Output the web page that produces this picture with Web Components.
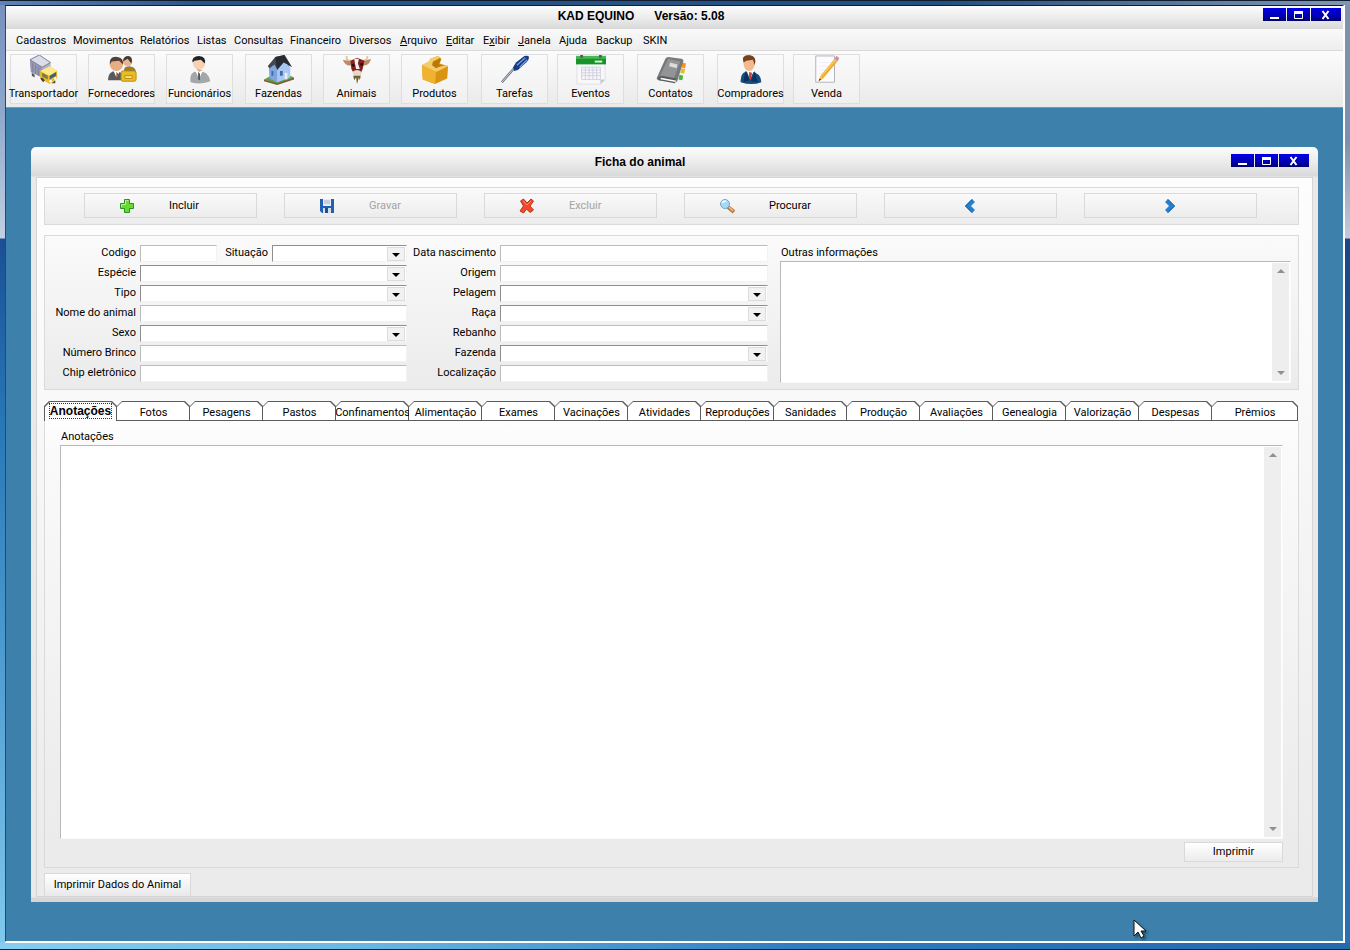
<!DOCTYPE html>
<html lang="pt-BR">
<head>
<meta charset="utf-8">
<title>KAD EQUINO</title>
<style>
  html, body { margin: 0; }
  body { font: 11px/16px Roboto, "Liberation Sans", sans-serif; color: #000; min-height: 100vh; display: flex; }
</style>
</head>
<body>
<kad-app></kad-app>
<script>
const ICONS = {
  truck: `<svg viewBox="0 0 32 32"><path d="M1 5 11 0l12 8v11l-9 5L2 18z" fill="#aeb0cb"/><path d="M1 5 11 0l12 8-9 5z" fill="#dcdde9"/><path d="m1 5 13 8v11L2 18z" fill="#9698b2"/><path d="M1 5 11 0l12 8-9 5z" fill="none" stroke="#7c7e94"/><path d="M4 9v9M7 11v9M10 13v9" stroke="#7f819b"/><path d="m12 17 10-5 8 5v8l-8 6-10-6z" fill="#eebc20"/><path d="m12 17 10-5 8 5-8 5z" fill="#ffe98a"/><path d="m22 22 7-4v4l-7 4z" fill="#40637c"/><path d="m14 19 6 3v4l-6-3z" fill="#7d7a45"/><path d="m12 25 2-1 3 3-2 2zM24 30l4-3v3z" fill="#4c4434"/><path d="m3 19 3 2v3l-3-2z" fill="#555566"/><circle cx="28" cy="25" r="1.300" fill="#fff"/><circle cx="23" cy="28" r="1.300" fill="#fff"/></svg>`,
  people: `<svg viewBox="0 0 32 32"><path d="M18 17q0-5 6-5 7 1 7 7v4H18z" fill="#777d7d"/><circle cx="22" cy="7" r="5" fill="#e9b68f"/><path d="M17 7q0-6 6-6 5 1 3 8l-4-5z" fill="#443a34"/><path d="M1 27q0-10 9-10 8 1 9 10z" fill="#555a5e"/><path d="m7 17 3 7 4-7z" fill="#fff"/><path d="m10 18 2 2-2 6z" fill="#9f4535"/><circle cx="10" cy="10" r="7" fill="#e7ad83"/><path d="M3 10Q2 1 11 2q7 1 6 8l-4-4-8 1z" fill="#554038"/><rect x="15" y="17" width="16" height="11" rx="2" fill="#e9bd1e" stroke="#b98c12"/><path d="M20 17v-3h7v3" stroke="#ac7e0e" fill="none" stroke-width="2"/><path d="M19 22h8v3h-8z" fill="#fbe17a" stroke="#b98c12"/></svg>`,
  person: `<svg viewBox="0 0 32 32"><path d="M6 29q-2-11 8-12 11 0 13 11-9 4-21 1z" fill="#a2a8aa"/><path d="m11 17 4 8 4-8z" fill="#fff"/><path d="m14 18 2 2v7l-2-1z" fill="#555"/><circle cx="15" cy="9" r="6.500" fill="#f8d2b0"/><path d="M8 8Q7 1 15 1q8 1 6 8l-4-4-7 1z" fill="#202325"/><path d="m12 15 3 3 4-2" fill="#dca77d"/></svg>`,
  house: `<svg viewBox="0 0 32 32"><path d="m0 26 17-9 15 7-18 7z" fill="#58a541"/><path d="m0 26 14 4 18-6v2l-18 6L0 28z" fill="#85573a"/><path d="m5 11 8-7 8 7 6-1v14l-13 5-8-4z" fill="#80a5dd"/><path d="m14 16 7-9 7 7v10l-14 5z" fill="#a8c8f3"/><path d="m4 12 8-10 10-2-8 15-3-5-5 4z" fill="#45464e"/><path d="m12 2 10-2 8 13-9-5-7 8z" fill="#292b32"/><path d="M17 17h3v5h-3zM8 17h2v5H8z" fill="#3e6cae"/><path d="M22 19h3v7h-3z" fill="#e7ecf4"/></svg>`,
  cow: `<svg viewBox="0 0 32 32"><path d="M10 6Q4 7 5 1M22 6q6 0 5-5" fill="none" stroke="#dcc7a4" stroke-width="2"/><path d="m10 7-9-2q2 7 9 6zM22 7l9-3q-2 8-9 7z" fill="#c08a68"/><path d="m9 6 7-3 8 3-2 9-3 7h-5l-4-7z" fill="#84201f"/><path d="m13 4 5 0-1 5 2 6h-4l-1-5z" fill="#f5efed"/><circle cx="12" cy="11" r="1.500" fill="#210f0e"/><circle cx="21" cy="10" r="1.500" fill="#210f0e"/><path d="M11 18q5-4 10 0l-2 5h-6z" fill="#ecd5c7"/><path d="m12 22 1 5 2-3 1 7 2-7 1 3 1-5z" fill="#6c6334"/></svg>`,
  box: `<svg viewBox="0 0 32 32"><path d="m2 11 8-4 1-3 8-3 4 3-2 5 9 3-1 13-13 6-13-5z" fill="#d99512"/><path d="m2 11 7-4 2-3 8-3 2 2-7 4-1 3 5 3 11-2 1 1-13 6z" fill="#f6cb68"/><path d="m2 11 15 7-1 13-13-5z" fill="#efb331"/><path d="m13 11 1-4 7-3 1 1-2 5 4 1-7 3z" fill="#b97a0c"/></svg>`,
  driver: `<svg viewBox="0 0 32 32"><path d="M2 29 16 13" stroke="#66717c" stroke-width="2.500"/><path d="M2 29 16 13" stroke="#d3dae1"/><path d="m14 13 3-5 9-7q4-1 5 1 0 3-3 6l-9 8-4 1z" fill="#183b85"/><path d="m18 11 9-8M21 13l8-8" stroke="#739ee0" stroke-width="1.500"/></svg>`,
  calendar: `<svg viewBox="0 0 32 32"><path d="M1 7h30v20l-5 4H1z" fill="#f8f8fb" stroke="#dedee6"/><path d="M0 1h32v9H0z" fill="#16942a"/><path d="M0 1h32v3H0z" fill="#48b955"/><path d="M6 0v3M26 0v3" stroke="#67516b" stroke-width="3"/><path d="M20 7h8" stroke="#d9ffe0" stroke-width="2"/><path d="M6 13h20v13H6zM6 16h20M6 19h20M6 22h20M10 13v13M14 13v13M18 13v13M22 13v13" stroke="#cfcfde" fill="none"/><path d="m26 31 0-5h5z" fill="#c7c7d0"/></svg>`,
  book: `<svg viewBox="0 0 32 32"><path d="m27 5 3 1-4 22-4 1z" fill="#eee"/><path d="m28 8 4 1-1 5-4-1z" fill="#ff8e1a"/><path d="m27 14 4 1-1 5-4-1z" fill="#e9bd1e"/><path d="m25 21 4 1-1 5-4-1z" fill="#45b735"/><path d="m1 24 9-20q1-2 3-2l14 2q3 1 2 3l-6 20q-1 3-4 2L3 27q-3-1-2-3z" fill="#77797b"/><path d="m4 23 9-19 13 3-7 18z" fill="#929496"/><path d="m15 8 8 2-1 4-8-2z" fill="#dadcdd"/><path d="m2 24 4-2 16 3-2 5-17-3z" fill="#5c5d5f"/><path d="m5 25 16 3" stroke="#fff" stroke-width="1.500"/></svg>`,
  buyer: `<svg viewBox="0 0 32 32"><path d="M5 29q-1-12 10-12 12 2 12 12-10 4-22 0z" fill="#174c80"/><path d="m11 16 4 10 4-9z" fill="#fff"/><path d="m14 18 3 1-1 8-2-3z" fill="#c43d32"/><path d="m10 17 5 10-7 2zM20 17l-4 11 7 1z" fill="#0e315f"/><ellipse cx="14" cy="9" rx="6" ry="8" fill="#f1b98d"/><path d="M8 8Q5 0 14 0q9 1 6 11l-2-6-7 1z" fill="#75421f"/></svg>`,
  note: `<svg viewBox="0 0 32 32"><path d="M4 1h20v28H4z" fill="#fcfcff" stroke="#adb0b5"/><path d="M8 8h12M8 12h12M8 16h12M8 20h12" stroke="#ededf4"/><path d="m7 28 2-6L24 4l3 3-15 18z" fill="#f7c04c"/><path d="m11 24 15-17" fill="none" stroke="#d9962c"/><path d="m24 4 2-3q2 0 3 3l-2 3z" fill="#d78c98"/><path d="m7 28 1-3 2 1z" fill="#444"/></svg>`,
  plus: `<svg viewBox="0 0 16 16"><path d="M5.500 1.500h5v4h4v5h-4v4h-5v-4h-4v-5h4z" fill="#67d935" stroke="#279620"/><path d="M6.500 6.500v-4h3M2.500 9v-2.500h4" fill="none" stroke="#b8f09a"/></svg>`,
  disk: `<svg viewBox="0 0 16 16"><path d="M1 1h14v14H3l-2-2z" fill="#235fb2"/><path d="M4 1h8v7H4z" fill="#e5edf5"/><path d="M5 3h6M5 5h6" stroke="#9eb5ca"/><path d="M4 10h8v5H4z" fill="#d3dfea"/><path d="M6 10h3v5H6z" fill="#234e83"/></svg>`,
  delete: `<svg viewBox="0 0 16 16"><path d="m1.500 3 3-2 3.500 4 4-4 2.500 2-3.500 5 3.500 4-3.500 2.500-3.500-3.500-3 4-3.500-2 3.500-5z" fill="#ee4b2b" stroke="#c22f1c"/><path d="m4 3 4 4 4-4" fill="none" stroke="#ff8668"/></svg>`,
  search: `<svg viewBox="0 0 16 16"><path d="m9 9 6 5" stroke="#bd7744" stroke-width="4"/><path d="m10 9 4 4" stroke="#f2c28d" stroke-width="1.500"/><circle cx="6" cy="6" r="4.500" fill="#a7d8f5" stroke="#6faacc"/><path d="M3 5q1-2 4-2" stroke="#fff" fill="none" stroke-width="1.500"/></svg>`,
  prev: `<svg viewBox="0 0 16 16"><path d="m10 1 3 3-4 4 4 4-3 3-7-7z" fill="#2581cf"/><path d="m10 1.500-6.500 6.500 6.500 6.500" fill="none" stroke="#175896"/></svg>`,
  next: `<svg viewBox="0 0 16 16"><path d="m6 1-3 3 4 4-4 4 3 3 7-7z" fill="#2581cf"/><path d="m6 1.500 6.500 6.500-6.500 6.500" fill="none" stroke="#175896"/></svg>`,
  cursor: `<svg viewBox="0 0 13 20"><path d="M1 1v16l4-4 3 6 3-2-3-5h5z" fill="#fff" stroke="#111" stroke-linejoin="round"/></svg>`
};

const define = (name, render) => customElements.define(name, class extends HTMLElement {
  connectedCallback() {
    if (this.shadowRoot) return;
    this.attachShadow({ mode: "open" }).innerHTML =
      `<style>*{box-sizing:border-box}:host([hidden]){display:none}button,input,select,textarea{font:inherit;color:inherit;margin:0;padding:0;border:0;border-radius:0;outline:0;background:none}</style>` + render(this);
  }
});

define("kad-icon", el => `<style>:host{display:block;flex:none}svg{display:block;width:100%;height:100%}</style>${ICONS[el.getAttribute("name")]}`);

define("kad-titlebar", () => `
<style>
  :host{display:flex;align-items:flex-start;font:bold 12px/16px "Liberation Sans",sans-serif;background:linear-gradient(#fcfcfc,#ececec 50%,#d9d9d9)}
  h1{flex:1;margin:0;font:inherit;text-align:center;white-space:pre}
  .controls{display:flex;gap:1px}
  button{width:23px;height:13px;display:grid;place-items:center;background:linear-gradient(#0000e6,#0000b4 60%,#000070)}
  button:last-child{width:30px}
  svg{width:12px;height:10px;display:block}
</style>
<h1><slot></slot></h1>
<div class="controls">
  <button aria-label="Minimizar"><svg viewBox="0 0 12 10"><path d="M1 8h9" stroke="#fff" stroke-width="2"/></svg></button>
  <button aria-label="Maximizar"><svg viewBox="0 0 12 10"><path d="M1.500 2h8v6.500h-8z" stroke="#fff" fill="none"/><path d="M1 2.500h9" stroke="#fff" stroke-width="3"/></svg></button>
  <button aria-label="Fechar"><svg viewBox="0 0 12 10"><path d="m2.500 1 6 8M8.500 1l-6 8" stroke="#fff" stroke-width="2"/></svg></button>
</div>`);

const MENU = ["Cadastros","Movimentos","Relatórios","Listas","Consultas","Financeiro","Diversos","<u>A</u>rquivo","<u>E</u>ditar","E<u>x</u>ibir","<u>J</u>anela","Ajuda","Backup","SKIN"];
define("kad-menubar", () => `
<style>
  :host{display:block;background:linear-gradient(#f9f9f9,#eee);border-bottom:1px solid #dadada}
  nav{display:grid;grid-template-columns:57px 67px 57px 37px 56px 59px 51px 46px 37px 35px 41px 37px 47px auto;padding:4px 0 1px 10px}
  button{text-align:left;white-space:nowrap}
</style>
<nav>${MENU.map(m => `<button>${m}</button>`).join("")}</nav>`);

define("kad-tool", el => `
<style>
  :host{display:block}
  button{width:67px;height:50px;border:1px solid #dedede;background:linear-gradient(#fafafa,#f0f0f0);display:flex;flex-direction:column;align-items:center;white-space:nowrap}
  kad-icon{width:30px;height:30px}
  span{padding-top:1px}
</style>
<button><kad-icon name="${el.getAttribute("icon")}"></kad-icon><span><slot></slot></span></button>`);

const TOOLS = [["truck","Transportador"],["people","Fornecedores"],["person","Funcionários"],["house","Fazendas"],["cow","Animais"],["box","Produtos"],["driver","Tarefas"],["calendar","Eventos"],["book","Contatos"],["buyer","Compradores"],["note","Venda"]];
define("kad-toolbar", () => `
<style>
  :host{display:grid;grid-template-columns:78px 78px 79px 78px 78px 80px 76px 80px 80px 76px 67px;padding:3px 4px;background:linear-gradient(#fcfcfc,#e9e9e9);border-bottom:1px solid #8f8f98}
</style>
${TOOLS.map(([i, t]) => `<kad-tool icon="${i}">${t}</kad-tool>`).join("")}`);

define("kad-action", el => `
<style>
  :host{display:block;flex:1 1 0}
  button{width:100%;height:25px;border:1px solid #d9d9d9;background:linear-gradient(#fafafa,#ececec);display:grid;grid-template-columns:77px 16px 1fr;align-items:center}
  .text{grid-template-columns:34px 16px 1fr}
  button:disabled{color:#a3a3a3}
  kad-icon{width:16px;height:16px;grid-column:2}
  .text span{text-align:left;padding:1px 0 0 34px}
</style>
<button class="${el.textContent ? "text" : ""}" ${el.hasAttribute("disabled") ? "disabled" : ""} aria-label="${el.getAttribute("label") || el.textContent}"><kad-icon name="${el.getAttribute("icon")}"></kad-icon>${el.textContent ? "<span><slot></slot></span>" : ""}</button>`);

define("kad-field", el => {
  const select = el.hasAttribute("select");
  return `
<style>
  :host{display:grid;grid-template-columns:var(--label,92px) minmax(0,1fr);column-gap:3px;height:20px}
  label{text-align:right;white-space:nowrap;padding-right:1px;line-height:16px}
  .box{display:block;position:relative;height:17px}
  input,select{display:block;width:100%;height:17px;background:#fff;border:1px solid #f2f2f2;border-top-color:#bcbcbc;border-left-color:#bcbcbc}
  select{appearance:none;border-top-color:#8e8e8e;border-left-color:#8e8e8e}
  i{position:absolute;right:2px;top:2px;width:18px;height:14px;border:1px solid #dcdcdc;background:#f2f2f2;pointer-events:none;display:grid;place-items:center;padding-top:2px}
  i::before{content:"";border:4px solid transparent;border-top-color:#000;border-bottom:0}
</style>
<label for="c">${el.getAttribute("label")}</label>
<span class="box">${select ? '<select id="c"></select><i></i>' : '<input id="c" type="text">'}</span>`;
});

define("kad-memo", el => `
<style>
  :host{display:flex;flex-direction:column;min-height:0}
  label{line-height:16px;padding-left:1px;align-self:flex-start}
  .box{flex:1;display:flex;background:#fff;border:1px solid #fafafa;border-top-color:#b8b8b8;border-left-color:#b8b8b8}
  textarea{flex:1;resize:none;min-width:0;overflow:hidden}
  .bar{width:17px;margin:1px 1px 1px 0;background:#eee;display:flex;flex-direction:column;justify-content:space-between;align-items:center;padding:6px 0}
  .bar::before,.bar::after{content:"";border:4px solid transparent}
  .bar::before{border-bottom-color:#909090;border-top:0}
  .bar::after{border-top-color:#909090;border-bottom:0}
</style>
<label for="m">${el.getAttribute("label")}</label>
<div class="box"><textarea id="m"></textarea><div class="bar"></div></div>`);

define("kad-form", () => `
<style>
  :host{display:grid;grid-template-columns:362px 361px minmax(0,1fr);padding:9px 7px 4px 0;border:1px solid #dadada;background:linear-gradient(#fafafa,#ebebeb)}
  .second{--label:90px}
  .pair{display:grid;grid-template-columns:172px minmax(0,1fr)}
  .pair :last-child{--label:52px}
  kad-memo{margin:0 0 2px 12px}
</style>
<div>
  <div class="pair"><kad-field label="Codigo"></kad-field><kad-field label="Situação" select></kad-field></div>
  <kad-field label="Espécie" select></kad-field>
  <kad-field label="Tipo" select></kad-field>
  <kad-field label="Nome do animal"></kad-field>
  <kad-field label="Sexo" select></kad-field>
  <kad-field label="Número Brinco"></kad-field>
  <kad-field label="Chip eletrônico"></kad-field>
</div>
<div class="second">
  <kad-field label="Data nascimento"></kad-field>
  <kad-field label="Origem"></kad-field>
  <kad-field label="Pelagem" select></kad-field>
  <kad-field label="Raça" select></kad-field>
  <kad-field label="Rebanho"></kad-field>
  <kad-field label="Fazenda" select></kad-field>
  <kad-field label="Localização"></kad-field>
</div>
<kad-memo label="Outras informações"></kad-memo>`);

const TABS = ["Anotações","Fotos","Pesagens","Pastos","Confinamentos","Alimentação","Exames","Vacinações","Atividades","Reproduções","Sanidades","Produção","Avaliações","Genealogia","Valorização","Despesas","Prêmios"];
define("kad-tabs", () => `
<style>
  :host{display:grid;grid-template-columns:repeat(16,73px) minmax(73px,1fr);height:20px;padding-right:1px}
  button{position:relative;display:flex;align-items:center;justify-content:center;white-space:nowrap;background:#5c5c5c;clip-path:polygon(0 5px,5px 0,calc(100% - 5px) 0,100% 5px,100% 100%,0 100%)}
  button::before{content:"";position:absolute;inset:1px 1px 1px 0;background:#fff;clip-path:polygon(0 5px,5px 0,calc(100% - 5px) 0,100% 5px,100% 100%,0 100%)}
  button[aria-selected=true]{font:bold 12px/14px "Liberation Sans",sans-serif}
  button[aria-selected=true]::before{inset:1px 1px 0 1px;background:#fcfcfc}
  button[aria-selected=true] span{outline:1px dotted #333;padding:0}
  span{position:relative;line-height:14px;padding-top:3px}
</style>
${TABS.map((t, i) => `<button role="tab" aria-selected="${!i}"><span>${t}</span></button>`).join("")}`);

define("kad-sheet", () => `
<style>
  :host{display:flex;flex-direction:column;background:linear-gradient(#fefefe,#fafafa 30px,#ebebeb 94%);border:1px solid #dadada;border-top:0;padding:8px 15px 5px}
  kad-memo{flex:1}
  button{align-self:flex-end;width:99px;height:20px;margin-top:3px;border:1px solid #d9d9d9;background:linear-gradient(#fff,#ececec)}
</style>
<kad-memo label="Anotações"></kad-memo>
<button>Imprimir</button>`);

define("kad-window", () => `
<style>
  :host{display:flex;flex-direction:column;border-radius:5px 5px 0 0;overflow:hidden;padding:0 5px 5px;background:linear-gradient(#fcfcfc,#ececec 15px,#d9d9d9 29px,#e9e9e9 30px,#e9e9e9 calc(100% - 5px),#d8d6d2 calc(100% - 4px))}
  kad-titlebar{height:30px;padding:7px 4px 0 13px;background:none}
  .panel{flex:1;display:flex;flex-direction:column;border:1px solid #d4d4d4;background:linear-gradient(#fdfdfd,#f9f9f9 30%,#ebebeb 94%);padding:9px 13px 0 7px}
  .actions{display:flex;gap:27px;padding:5px 41px 5px 39px;border:1px solid #dadada;background:linear-gradient(#fafafa,#ececec);height:38px;margin-bottom:10px}
  kad-tabs{margin-top:11px}
  kad-sheet{flex:1}
  footer{display:flex;padding-top:5px}
  .print{height:23px;width:147px;border:1px solid #d9d9d9;border-bottom:0;background:linear-gradient(#fff,#e9e9e9)}
</style>
<kad-titlebar>Ficha do animal</kad-titlebar>
<div class="panel">
  <div class="actions">
    <kad-action icon="plus">Incluir</kad-action>
    <kad-action icon="disk" disabled>Gravar</kad-action>
    <kad-action icon="delete" disabled>Excluir</kad-action>
    <kad-action icon="search">Procurar</kad-action>
    <kad-action icon="prev" label="Anterior"></kad-action>
    <kad-action icon="next" label="Próximo"></kad-action>
  </div>
  <kad-form></kad-form>
  <kad-tabs></kad-tabs>
  <kad-sheet></kad-sheet>
  <footer><button class="print">Imprimir Dados do Animal</button></footer>
</div>`);

define("kad-app", () => `
<style>
  :host{flex:1;min-width:0;display:flex;position:relative;padding:5px 6px 8px 5px;
    background:
      linear-gradient(#101c30,#101c30) top/100% 1px no-repeat,
      linear-gradient(90deg,#5f83b5,#2a5488 15%,#24507f 70%,#8296b4) 0 1px/100% 4px no-repeat,
      linear-gradient(#0d2747,#0d2747) bottom/100% 1px no-repeat,
      linear-gradient(90deg,#86cdf0,#6db9e5 25%,#2f7ac0 60%,#2468ae) 0 calc(100% - 1px)/100% 6px no-repeat,
      linear-gradient(#7590be,#8aa4ca 100px,#c0d0e2 238px,#1b4f95 239px,#2878b8 45%,#80c9ee) left/5px 100% no-repeat,
      linear-gradient(#8091ad,#7d8fac 140px,#c0cddd 238px,#1c4585 239px,#1d5aa5 50%,#2b70b5) right/5px 100% no-repeat,#fff}
  main{flex:1;min-width:0;display:flex;flex-direction:column;border:1px solid #fff;border-top-color:#0d1f38;border-left-color:#33465e}
  .top{height:23px;padding:2px 2px 0 13px}
  .desk{flex:1;display:flex;flex-direction:column;background:#3c80ab;padding:39px 25px}
  kad-window{flex:1}
  .pointer{position:absolute;left:1133px;top:919px;width:13px;height:20px;filter:drop-shadow(2px 2px 1px #0006)}
</style>
<main>
  <kad-titlebar class="top">KAD EQUINO      Versão: 5.08</kad-titlebar>
  <kad-menubar></kad-menubar>
  <kad-toolbar></kad-toolbar>
  <div class="desk"><kad-window></kad-window></div>
</main>
<kad-icon class="pointer" name="cursor"></kad-icon>`);
</script>
</body>
</html>
